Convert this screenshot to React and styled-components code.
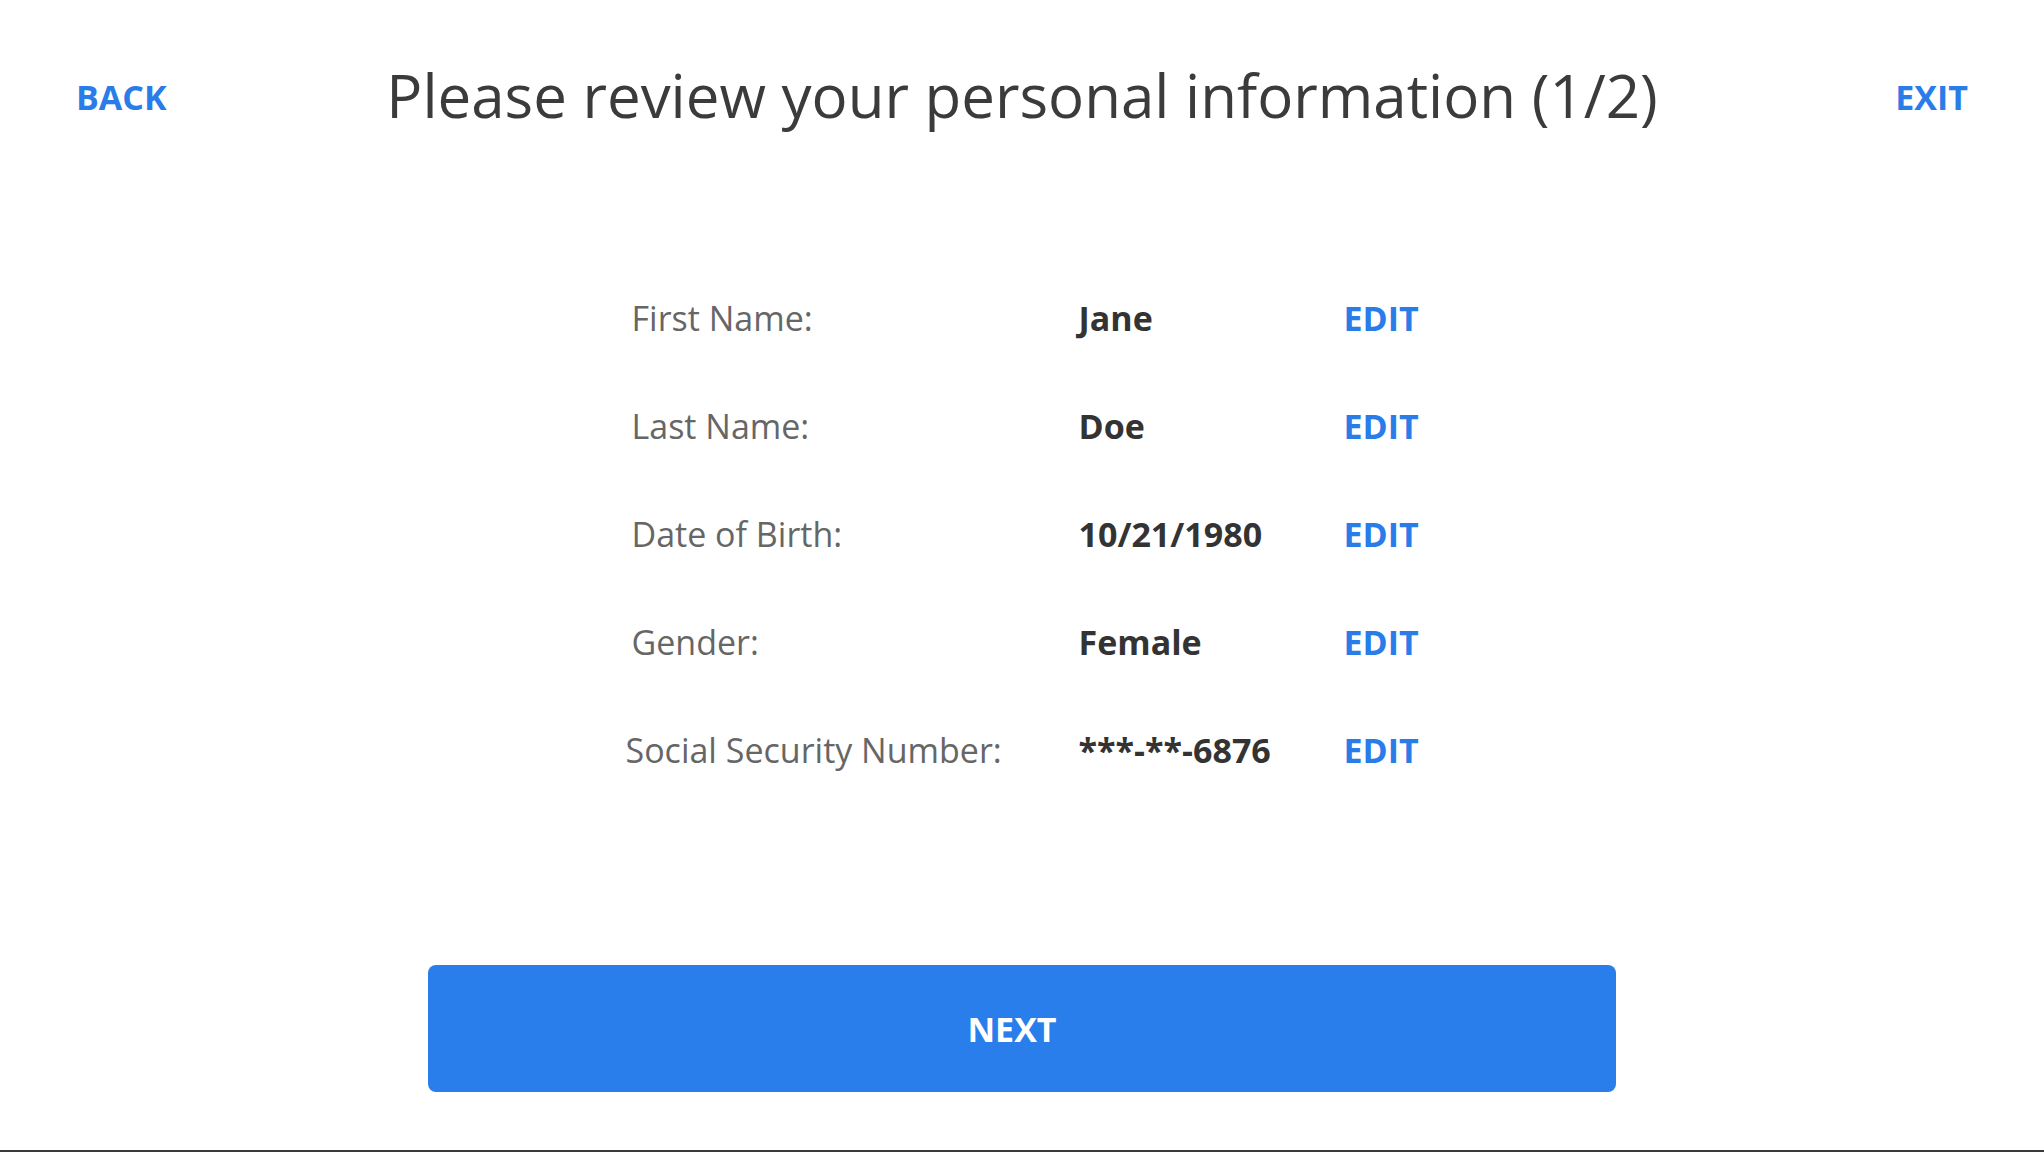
import React from 'react';
import styled, { createGlobalStyle } from 'styled-components';

const GlobalStyle = createGlobalStyle`
  html, body {
    margin: 0;
    padding: 0;
    background: #ffffff;
  }
  body {
    font-family: "Open Sans", "Liberation Sans", sans-serif;
  }
`;

const Page = styled.div`
  width: 100%;
  height: 1152px;
  display: flex;
  flex-direction: column;
  box-sizing: border-box;
  border-bottom: 2px solid #3a3a3a;
`;

const Header = styled.header`
  height: 194px;
  padding: 0 76px;
  display: flex;
  align-items: center;
  justify-content: space-between;
`;

const NavLink = styled.a`
  font-size: 34px;
  font-weight: 700;
  color: #2a7de9;
  text-decoration: none;
  cursor: pointer;
  width: 100px;
  text-align: ${(p) => (p.$right ? 'right' : 'left')};
`;

const Title = styled.h1`
  margin: 0 0 4px;
  font-size: 60px;
  font-weight: 400;
  color: #3b3b3b;
`;

const Details = styled.div`
  margin: 70px auto 0;
  padding-left: 4px;
  display: grid;
  grid-template-columns: 447px 265px 73px;
  grid-auto-rows: 108px;
  align-items: center;
`;

const Label = styled.div`
  font-size: 34px;
  color: #666666;
  margin-left: ${(p) => (p.$shift ? '-6px' : '0')};
`;

const Value = styled.div`
  font-size: 34px;
  font-weight: 700;
  color: #333333;
`;

const EditLink = styled.a`
  font-size: 34px;
  font-weight: 700;
  color: #2a7de9;
  text-decoration: none;
  cursor: pointer;
`;

const Footer = styled.div`
  margin-top: auto;
  padding: 0 428px 58px;
`;

const NextButton = styled.button`
  width: 100%;
  height: 127px;
  padding: 0 20px 0 0;
  border: none;
  border-radius: 8px;
  background: #297eeb;
  color: #ffffff;
  font-family: inherit;
  font-size: 34px;
  font-weight: 700;
  cursor: pointer;
`;

const rows = [
  { label: 'First Name:', value: 'Jane' },
  { label: 'Last Name:', value: 'Doe' },
  { label: 'Date of Birth:', value: '10/21/1980' },
  { label: 'Gender:', value: 'Female' },
  { label: 'Social Security Number:', value: '***-**-6876', shift: true },
];

const App = () => (
  <>
    <GlobalStyle />
    <Page>
      <Header>
        <NavLink>BACK</NavLink>
        <Title>Please review your personal information (1/2)</Title>
        <NavLink $right>EXIT</NavLink>
      </Header>
      <Details>
        {rows.map((row) => (
          <React.Fragment key={row.label}>
            <Label $shift={row.shift}>{row.label}</Label>
            <Value>{row.value}</Value>
            <EditLink>EDIT</EditLink>
          </React.Fragment>
        ))}
      </Details>
      <Footer>
        <NextButton>NEXT</NextButton>
      </Footer>
    </Page>
  </>
);

export default App;
